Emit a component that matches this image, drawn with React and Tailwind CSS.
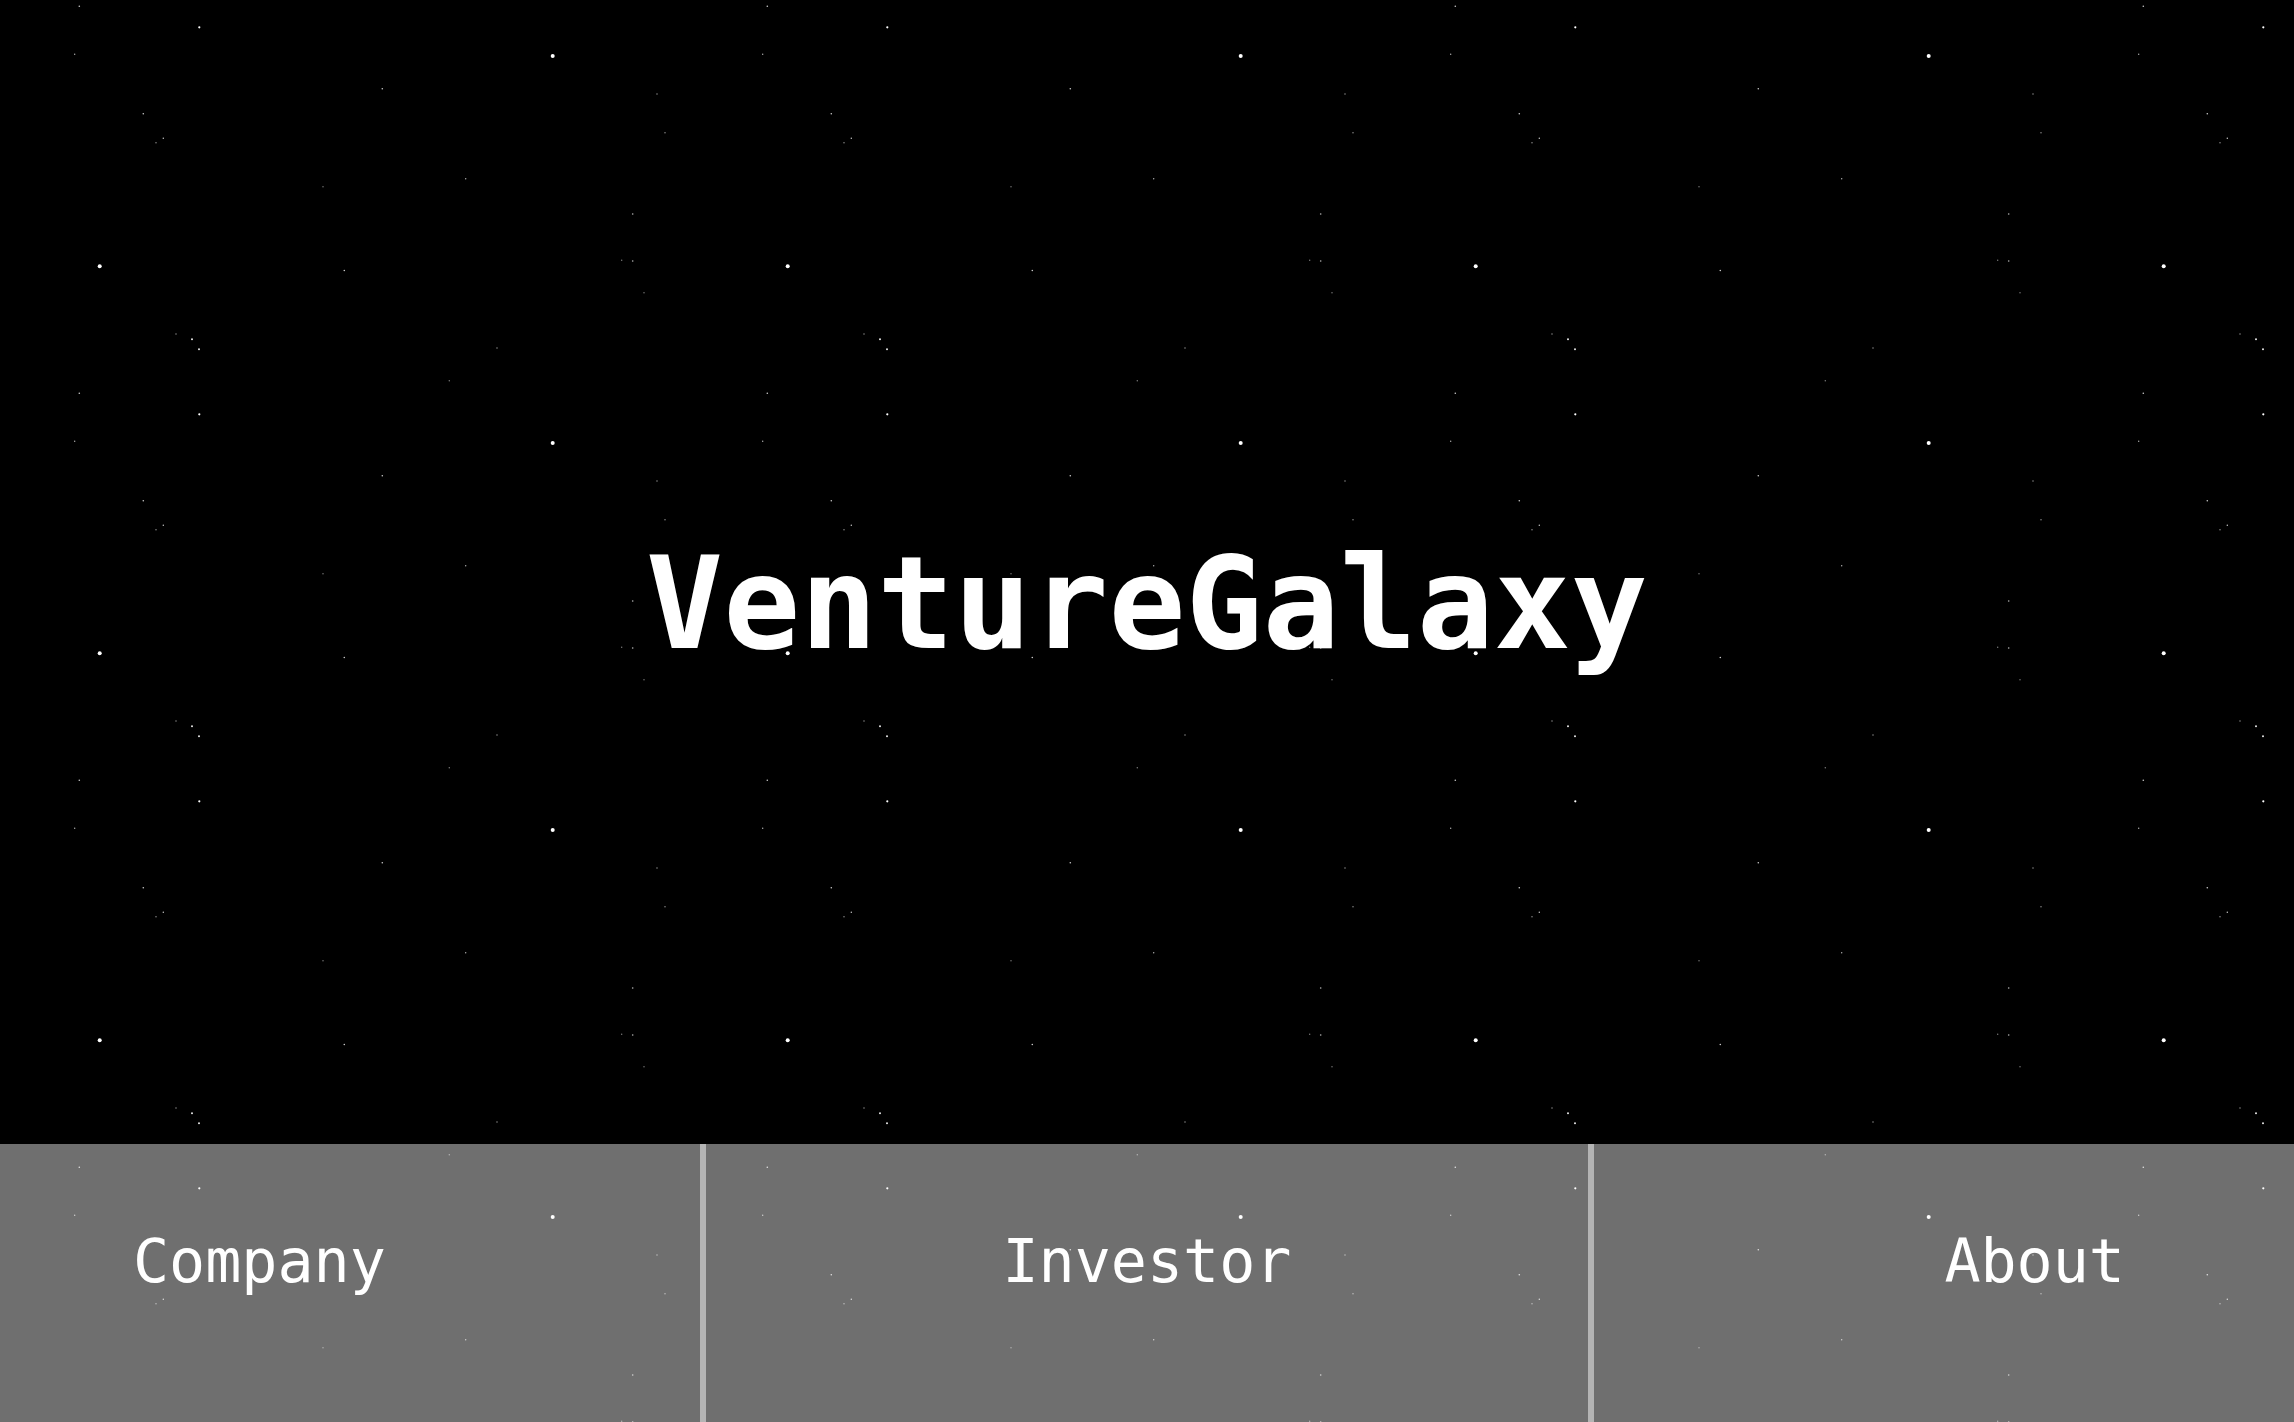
import React from 'react';

// one tile of the star field, repeats every 688 x 387
const stars = [
    [79.3, 6.3, 0.8, 0.8],
    [199.3, 27.3, 1.1, 1],
    [74.7, 54.3, 0.7, 0.7],
    [143.3, 113.7, 0.8, 0.8],
    [163.3, 138.3, 0.7, 0.8],
    [156, 142.7, 0.8, 0.5],
    [323, 186.7, 0.7, 0.5],
    [552.7, 56, 2, 1],
    [382.3, 88.7, 0.8, 0.8],
    [657, 94, 0.8, 0.5],
    [665, 132.7, 0.8, 0.5],
    [465.7, 178.7, 0.7, 0.7],
    [99.7, 266.3, 2, 1],
    [176, 334, 0.7, 0.6],
    [192, 339.3, 1, 0.9],
    [199, 349.3, 1, 0.9],
    [344.3, 270.5, 0.8, 0.8],
    [632.7, 214, 0.8, 0.7],
    [621.7, 260.3, 0.7, 0.5],
    [632.7, 261, 0.8, 0.7],
    [644, 292.7, 0.7, 0.5],
    [497, 348, 0.8, 0.5],
    [449.3, 380.7, 0.7, 0.5],
];

const StarField = () => (
    <svg className="absolute inset-0 w-full h-full" aria-hidden="true">
        <defs>
            <pattern id="stars" width="688" height="387" patternUnits="userSpaceOnUse">
                {stars.map(([x, y, r, o], i) => (
                    <circle key={i} cx={x} cy={y} r={r} fill="#fff" fillOpacity={o} />
                ))}
            </pattern>
        </defs>
        <rect width="100%" height="100%" fill="url(#stars)" />
    </svg>
);

const NavItem = ({ label, className }) => (
    <button
        className={`h-full flex items-start pt-[87px] bg-[rgba(255,255,255,0.435)] text-white text-[60px] leading-none font-['DejaVu_Sans_Mono',monospace] ${className}`}
    >
        {label}
    </button>
);

const Divider = () => <div className="w-[6px] h-full bg-[rgba(255,255,255,0.706)]" />;

export default function App() {
    return (
        <div className="relative h-screen w-full overflow-hidden bg-black">
            <StarField />

            <div className="relative flex flex-col h-full">
                <main className="flex-1 flex items-center justify-center pt-16">
                    <h1 className="text-white text-[128px] leading-none font-bold font-['DejaVu_Sans_Mono',monospace]">
                        VentureGalaxy
                    </h1>
                </main>

                <nav className="h-[278px] flex">
                    <NavItem label="Company" className="w-[700px] justify-start pl-[133px]" />
                    <Divider />
                    <NavItem label="Investor" className="flex-1 justify-center" />
                    <Divider />
                    <NavItem label="About" className="w-[700px] justify-end pr-[169px]" />
                </nav>
            </div>
        </div>
    );
}
